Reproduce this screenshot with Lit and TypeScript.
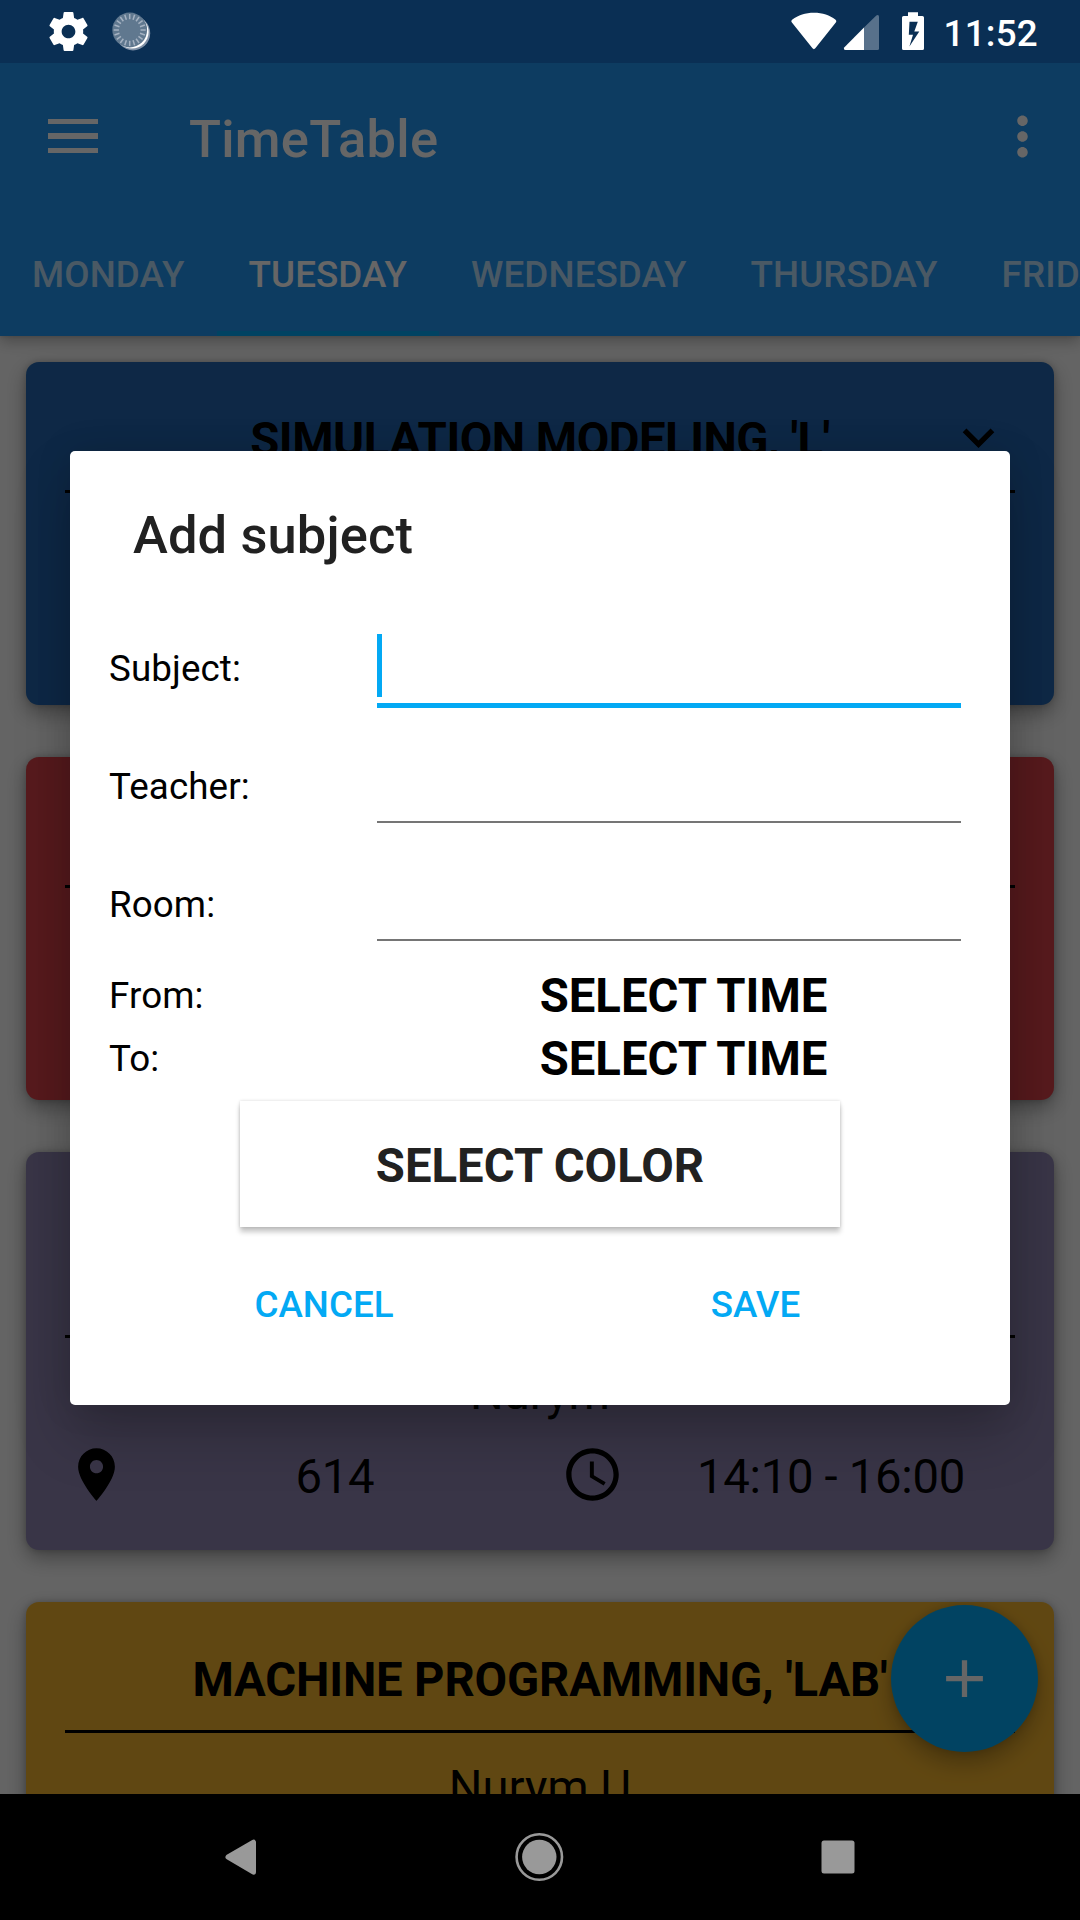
import { LitElement, html, css, svg, nothing } from "lit";
import { customElement, property } from "lit/decorators.js";
import { styleMap } from "lit/directives/style-map.js";

const PATHS = {
  expand: "M16.59 8.59L12 13.17 7.41 8.59 6 10l6 6 6-6z",
  place:
    "M12 2C8.13 2 5 5.13 5 9c0 5.25 7 13 7 13s7-7.75 7-13c0-3.87-3.13-7-7-7zm0 9.5c-1.38 0-2.5-1.12-2.5-2.5s1.12-2.5 2.5-2.5 2.5 1.12 2.5 2.5-1.12 2.5-2.5 2.5z",
  clock:
    "M11.99 2C6.47 2 2 6.48 2 12s4.47 10 9.99 10C17.52 22 22 17.52 22 12S17.52 2 11.99 2zM12 20c-4.42 0-8-3.58-8-8s3.58-8 8-8 8 3.58 8 8-3.58 8-8 8zm.5-13H11v6l5.25 3.15.75-1.23-4.5-2.67z",
  add: "M19 13h-6v6h-2v-6H5v-2h6V5h2v6h6v2z",
  more: "M12 8c1.1 0 2-.9 2-2s-.9-2-2-2-2 .9-2 2 .9 2 2 2zm0 2c-1.1 0-2 .9-2 2s.9 2 2 2 2-.9 2-2-.9-2-2-2zm0 6c-1.1 0-2 .9-2 2s.9 2 2 2 2-.9 2-2-.9-2-2-2z",
  gear: "M19.43 12.98c.04-.32.07-.64.07-.98s-.03-.66-.07-.98l2.11-1.65c.19-.15.24-.42.12-.64l-2-3.46c-.12-.22-.39-.3-.61-.22l-2.49 1c-.52-.4-1.08-.73-1.69-.98l-.38-2.65C14.46 2.18 14.25 2 14 2h-4c-.25 0-.46.18-.49.42l-.38 2.65c-.61.25-1.17.59-1.69.98l-2.49-1c-.23-.09-.49 0-.61.22l-2 3.46c-.13.22-.07.49.12.64l2.11 1.65c-.04.32-.07.65-.07.98s.03.66.07.98l-2.11 1.65c-.19.15-.24.42-.12.64l2 3.46c.12.22.39.3.61.22l2.49-1c.52.4 1.08.73 1.69.98l.38 2.65c.03.24.24.42.49.42h4c.25 0 .46-.18.49-.42l.38-2.65c.61-.25 1.17-.59 1.69-.98l2.49 1c.23.09.49 0 .61-.22l2-3.46c.12-.22.07-.49-.12-.64l-2.11-1.65zM12 15.5c-1.93 0-3.5-1.57-3.5-3.5s1.57-3.5 3.5-3.5 3.5 1.57 3.5 3.5-1.57 3.5-3.5 3.5z",
};

const icon = (name: keyof typeof PATHS, cls = "icon") =>
  html`<svg class=${cls} viewBox="0 0 24 24" fill="currentColor"><path d=${PATHS[name]}></path></svg>`;

interface Lesson {
  color: string;
  title: string;
  tracking: number;
  teacher: string;
  room: string;
  time: string;
  lines: number;
  menu: boolean;
}

const LESSONS: Lesson[] = [
  { color: "#2365af", title: "SIMULATION MODELING, 'L'", tracking: -0.5, teacher: "", room: "", time: "", lines: 1, menu: true },
  { color: "#d9434a", title: "", tracking: 0, teacher: "", room: "", time: "", lines: 1, menu: false },
  { color: "#8f86b2", title: "", tracking: 0, teacher: "Nurym", room: "614", time: "14:10 - 16:00", lines: 2, menu: false },
  { color: "#f1b22d", title: "MACHINE PROGRAMMING, 'LAB'", tracking: -0.15, teacher: "Nurym U", room: "", time: "", lines: 1, menu: false },
];

@customElement("status-bar")
class StatusBar extends LitElement {
  static styles = css`
    :host {
      display: flex;
      height: 63px;
      background: #0a2f54;
      color: #fff;
    }
    svg {
      display: block;
    }
    .left {
      display: flex;
      padding-left: 45px;
      gap: 15px;
    }
    .gear {
      width: 47px;
      height: 47px;
      margin-top: 8px;
    }
    .right {
      margin-left: auto;
      padding-right: 42px;
      display: flex;
    }
    .time {
      width: 95px;
      text-align: right;
      font-size: 36.75px;
      font-weight: 500;
      line-height: 43px;
      letter-spacing: 0.25px;
      padding-top: 12px;
      white-space: nowrap;
    }
  `;
  render() {
    const ticks = Array.from({ length: 20 }, (_, i) => i * 18);
    return html`
      <div class="left">
        ${icon("gear", "gear")}
        <svg width="44" height="63" viewBox="107 0 44 63">
          <circle cx="133" cy="33.2" r="17.2" fill="#7f90a6"></circle>
          <circle cx="132" cy="32" r="16.6" fill="#fff"></circle>
          <circle cx="129.7" cy="30" r="17.4" fill="#60788f"></circle>
          ${ticks.map(
            (a) => svg`<path d="M129.7 14v5.2" stroke="#a5b2c2" stroke-width="1.5" transform="rotate(${a} 129.7 30)"></path>`
          )}
        </svg>
      </div>
      <div class="right">
        <svg width="152" height="63" viewBox="791 0 152 63" fill="#fff">
          <path d="M791.9 22.6C791 21.4 791.2 20.5 792.4 19.6C798 15.4 805.5 12.8 814 12.8C822.5 12.8 830 15.4 835.3 19.6C836.5 20.5 836.6 21.4 835.8 22.6L815.3 48.3C814.4 49.4 813.4 49.4 812.5 48.3Z"></path>
          <path d="M864 27.5V50H845.5Q843.2 49.5 844.2 47.4Z"></path>
          <path d="M864 27.5L876.3 15.5Q879 14.2 879 17V48.5Q879 50 877.5 50H864Z" opacity=".32"></path>
          <path
            fill-rule="evenodd"
            d="M908 12.2h10v3.8h4.4q1.600 0 1.600 1.600v30.800q0 1.600-1.600 1.600h-18.800q-1.600 0-1.600-1.600v-30.800q0-1.600 1.600-1.600h4.400zM909.500 21.800L908.800 34.800h4.200L909.400 46.500L919.300 31.400h-5L917.800 21.800z"
          ></path>
        </svg>
        <div class="time">11:52</div>
      </div>
    `;
  }
}

@customElement("app-header")
class AppHeader extends LitElement {
  static styles = css`
    :host {
      display: block;
      position: relative;
      z-index: 1;
      height: 273px;
      background: #2196f3;
      color: #fff;
      box-shadow: 0 5px 14px rgba(0, 0, 0, 0.28), 0 0 4px rgba(0, 0, 0, 0.15);
    }
    .bar {
      display: flex;
      align-items: center;
      height: 147px;
      padding: 0 26px 0 48px;
    }
    .menu {
      display: flex;
      flex-direction: column;
      gap: 9px;
      width: 50px;
      margin: 0 91px 1px 0;
    }
    .menu i {
      height: 5.25px;
      background: #fff;
    }
    .title {
      flex: 1;
      font-size: 52.5px;
      font-weight: 500;
      line-height: 62px;
      letter-spacing: 0.25px;
      padding-top: 4px;
    }
    .icon {
      display: block;
      width: 63px;
      height: 63px;
    }
    .tabs {
      display: flex;
      height: 126px;
      overflow: hidden;
    }
    .tab {
      flex: none;
      box-sizing: border-box;
      height: 126px;
      padding: 3px 32px 0;
      font-size: 36.75px;
      font-weight: 500;
      line-height: 124px;
      letter-spacing: 0.1px;
      color: rgba(255, 255, 255, 0.7);
    }
    .tab.on {
      color: #fff;
      border-bottom: 5px solid #03a9f4;
    }
  `;
  render() {
    const days = ["MONDAY", "TUESDAY", "WEDNESDAY", "THURSDAY", "FRIDAY"];
    return html`
      <div class="bar">
        <div class="menu"><i></i><i></i><i></i></div>
        <div class="title">TimeTable</div>
        ${icon("more")}
      </div>
      <div class="tabs">${days.map((d, i) => html`<div class=${i === 1 ? "tab on" : "tab"}>${d}</div>`)}</div>
    `;
  }
}

@customElement("lesson-card")
class LessonCard extends LitElement {
  @property({ attribute: false }) lesson!: Lesson;
  static styles = css`
    :host {
      display: block;
    }
    .card {
      border-radius: 13px;
      padding: 51px 39px 44px;
      color: #000;
      font-size: 47.25px;
      line-height: 55px;
      text-align: center;
      box-shadow: 0 8px 20px rgba(0, 0, 0, 0.34), 0 0 7px rgba(0, 0, 0, 0.2);
    }
    .head {
      display: grid;
      grid-template-columns: 68px 1fr 68px;
      padding-bottom: 22px;
      border-bottom: 3px solid #000;
    }
    .title {
      grid-column: 2;
      font-weight: 700;
      white-space: nowrap;
    }
    .icon {
      display: block;
      width: 63px;
      height: 63px;
    }
    .head .icon {
      margin: -7px 0 -8px;
    }
    .teacher {
      height: 55px;
      margin-top: 28px;
    }
    .info {
      display: grid;
      grid-template-columns: 63px 414px 19px 63px 414px;
      height: 63px;
      margin: 22px -16px 0 0;
      letter-spacing: -0.3px;
    }
    .room {
      grid-column: 2;
      padding-top: 7px;
    }
    .clock {
      grid-column: 4;
    }
    .time {
      grid-column: 5;
      padding-top: 7px;
    }
  `;
  render() {
    const l = this.lesson;
    return html`
      <div class="card" style=${styleMap({ background: l.color })}>
        <div class="head">
          <div class="title" style=${styleMap({ height: `${l.lines * 55}px`, letterSpacing: `${l.tracking}px` })}>${l.title}</div>
          ${l.menu ? icon("expand") : nothing}
        </div>
        <div class="teacher">${l.teacher}</div>
        <div class="info">
          ${l.room
            ? html`<div class="place">${icon("place")}</div>
                <span class="room">${l.room}</span>
                <div class="clock">${icon("clock")}</div>
                <span class="time">${l.time}</span>`
            : nothing}
        </div>
      </div>
    `;
  }
}

@customElement("subject-dialog")
class SubjectDialog extends LitElement {
  static styles = css`
    :host {
      display: block;
      box-sizing: border-box;
      width: 940px;
      height: 954px;
      padding-top: 53px;
      border-radius: 5px;
      background: #fff;
      color: #000;
      font-size: 36.75px;
      box-shadow: 0 30px 56px rgba(0, 0, 0, 0.22), 0 0 36px rgba(0, 0, 0, 0.12);
    }
    h2 {
      margin: 0 0 43px 63px;
      font-size: 52.5px;
      font-weight: 500;
      line-height: 62px;
      letter-spacing: 0.1px;
      color: #212121;
    }
    .row {
      display: grid;
      grid-template-columns: 268px 584px;
      height: 118px;
      padding-left: 39px;
      line-height: 120px;
      letter-spacing: 0.1px;
    }
    .field {
      display: flex;
      align-items: flex-end;
      box-sizing: border-box;
      height: 96px;
      border-bottom: 2px solid #757575;
    }
    .field.focus {
      height: 99px;
      padding-bottom: 6px;
      border-bottom: 5px solid #03a9f4;
    }
    .caret {
      width: 5px;
      height: 63px;
      background: #03a9f4;
    }
    .row.pick {
      grid-template-columns: 268px 613px;
      height: 63px;
      line-height: 63px;
    }
    .row.first {
      margin-top: 1px;
    }
    .value {
      text-align: center;
      font-size: 47.25px;
      font-weight: 700;
      line-height: 65px;
      letter-spacing: 0;
    }
    .color {
      box-sizing: border-box;
      width: 600px;
      height: 126px;
      margin: 11px auto 0;
      padding-top: 2px;
      line-height: 126px;
      text-align: center;
      font-size: 47.25px;
      font-weight: 700;
      color: #212121;
      background: #fff;
      box-shadow: 0 5px 5px rgba(0, 0, 0, 0.22), 0 0 3px rgba(0, 0, 0, 0.16);
    }
    .actions {
      display: grid;
      grid-template-columns: 432px 431px;
      margin: 15px 0 0 38px;
      line-height: 126px;
      text-align: center;
      font-weight: 500;
      color: #03a9f4;
    }
  `;
  render() {
    return html`
      <h2>Add subject</h2>
      <div class="row">
        <span>Subject:</span>
        <div class="field focus"><div class="caret"></div></div>
      </div>
      <div class="row"><span>Teacher:</span><div class="field"></div></div>
      <div class="row"><span>Room:</span><div class="field"></div></div>
      <div class="row pick first"><span>From:</span><span class="value">SELECT TIME</span></div>
      <div class="row pick"><span>To:</span><span class="value">SELECT TIME</span></div>
      <div class="color">SELECT COLOR</div>
      <div class="actions"><span>CANCEL</span><span>SAVE</span></div>
    `;
  }
}

@customElement("nav-bar")
class NavBar extends LitElement {
  static styles = css`
    :host {
      display: flex;
      align-items: center;
      justify-content: space-between;
      box-sizing: border-box;
      height: 126px;
      padding: 0 209px 0 210px;
      background: #000;
    }
    svg {
      display: block;
      width: 63px;
      height: 63px;
    }
  `;
  render() {
    return html`
      <svg viewBox="0 0 63 63">
        <path d="M18 31L43.5 16.2V46.2Z" fill="#999" stroke="#999" stroke-width="5" stroke-linejoin="round"></path>
      </svg>
      <svg viewBox="0 0 63 63">
        <circle cx="30.3" cy="31" r="22.7" fill="none" stroke="#999" stroke-width="2.6"></circle>
        <circle cx="30.3" cy="31" r="17.2" fill="#999"></circle>
      </svg>
      <svg viewBox="0 0 63 63"><rect x="13.5" y="14.5" width="33" height="33" rx="2.5" fill="#999"></rect></svg>
    `;
  }
}

@customElement("app-root")
class AppRoot extends LitElement {
  static styles = css`
    :host {
      display: flex;
      flex-direction: column;
      position: relative;
      width: 1080px;
      height: 1920px;
      overflow: hidden;
      background: #fafafa;
      font-family: Roboto, sans-serif;
    }
    .screen {
      position: relative;
      flex: 1;
      display: flex;
      flex-direction: column;
      min-height: 0;
      overflow: hidden;
    }
    .list {
      display: flex;
      flex-direction: column;
      gap: 52px;
      padding: 26px;
    }
    .fab {
      position: absolute;
      right: 42px;
      bottom: 42px;
      width: 147px;
      height: 147px;
      border-radius: 50%;
      display: grid;
      place-items: center;
      background: #03a9f4;
      color: #fff;
      box-shadow: 0 12px 22px rgba(0, 0, 0, 0.26), 0 0 8px rgba(0, 0, 0, 0.14);
    }
    .fab .icon {
      width: 63px;
      height: 63px;
    }
    .scrim {
      position: absolute;
      inset: 0;
      z-index: 2;
      background: rgba(0, 0, 0, 0.6);
    }
    subject-dialog {
      position: absolute;
      left: 70px;
      top: 388px;
      z-index: 3;
    }
  `;
  render() {
    return html`
      <status-bar></status-bar>
      <div class="screen">
        <app-header></app-header>
        <div class="list">${LESSONS.map((l) => html`<lesson-card .lesson=${l}></lesson-card>`)}</div>
        <div class="fab">${icon("add")}</div>
        <div class="scrim"></div>
        <subject-dialog></subject-dialog>
      </div>
      <nav-bar></nav-bar>
    `;
  }
}
